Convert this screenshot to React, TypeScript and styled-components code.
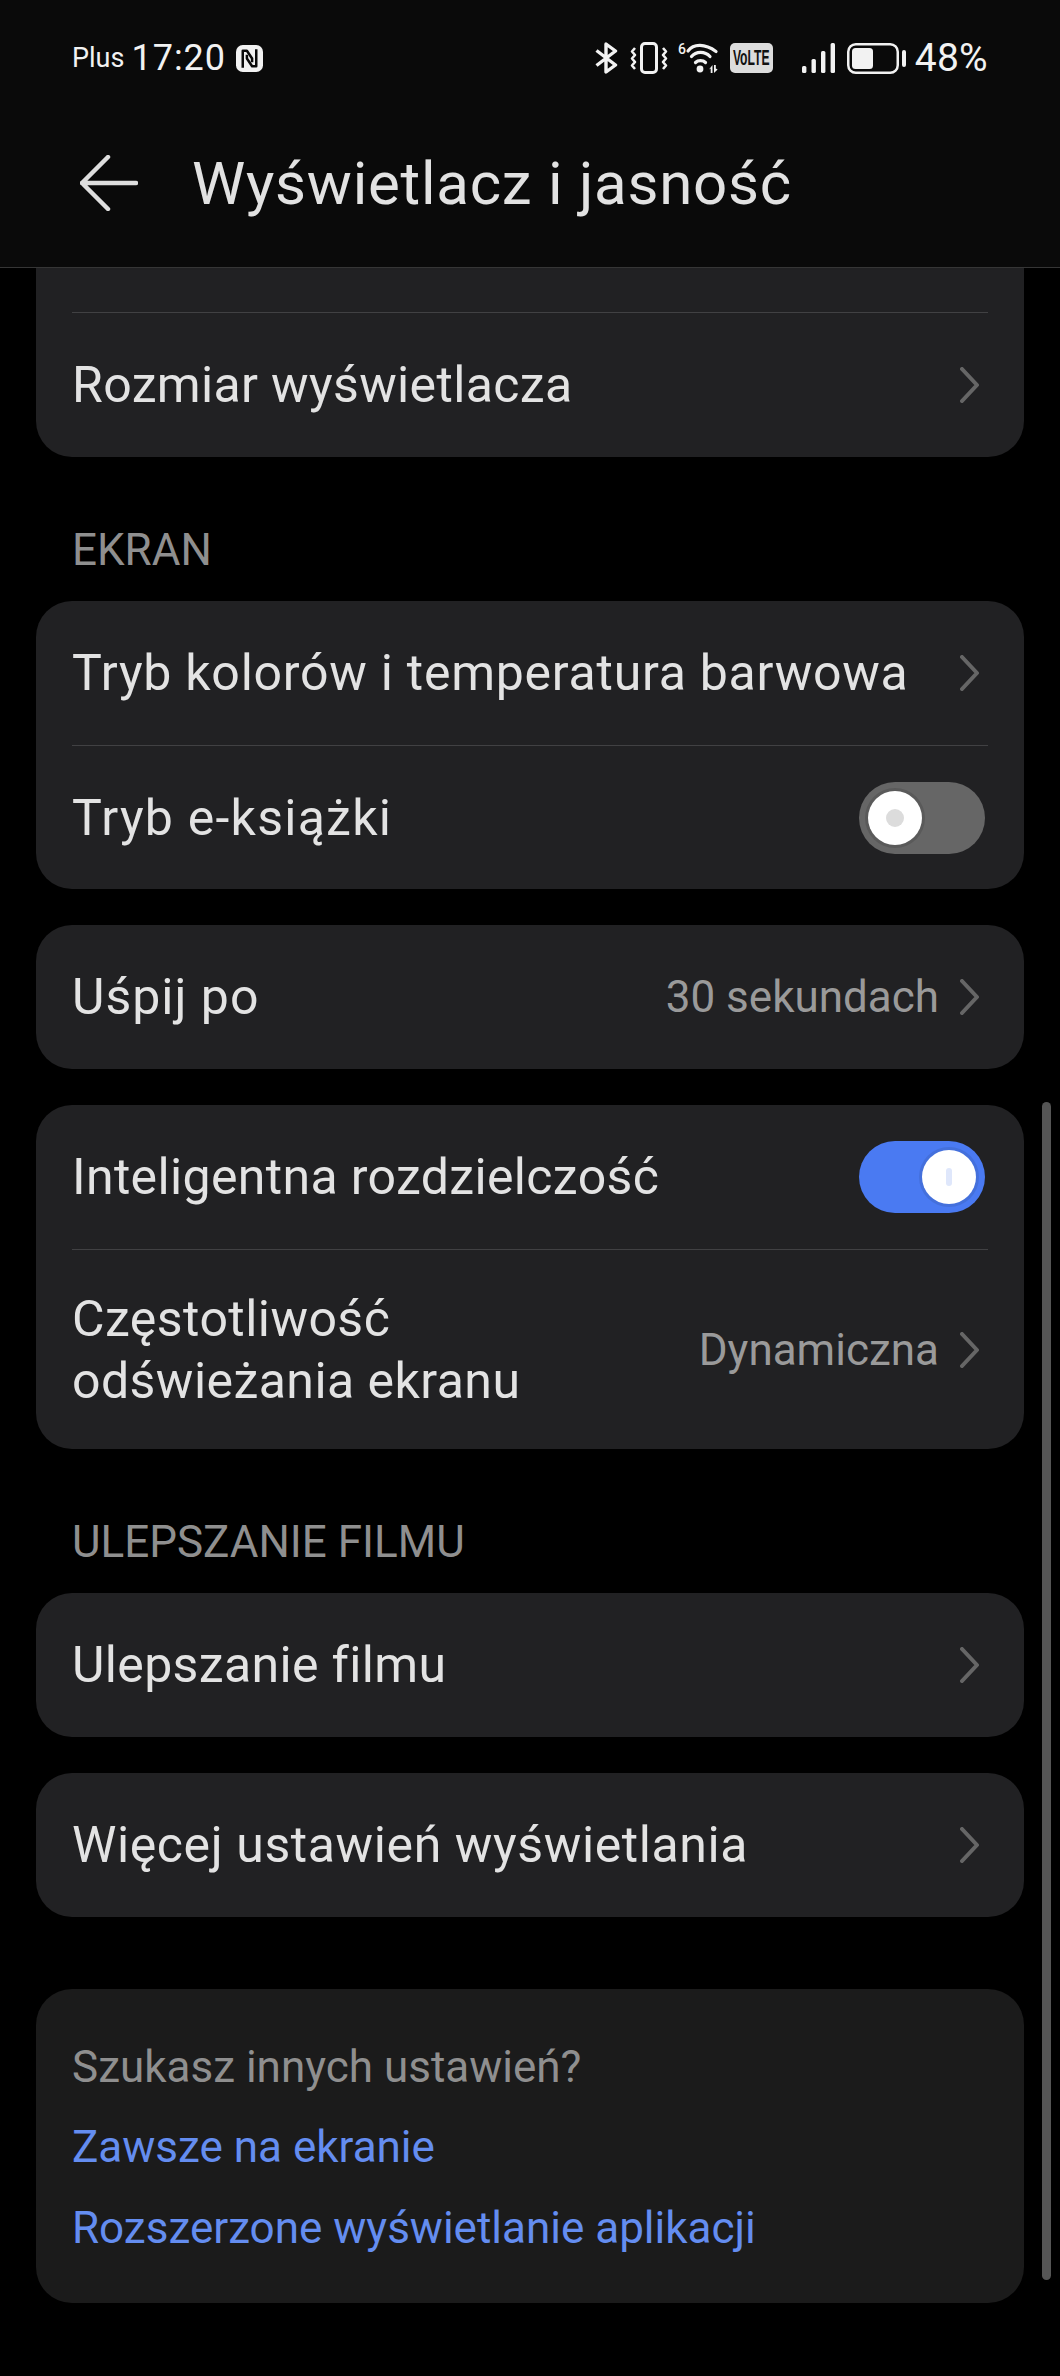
import React from 'react';
import styled, { createGlobalStyle } from 'styled-components';

const GlobalStyle = createGlobalStyle`
  html, body {
    margin: 0;
    padding: 0;
    background: #000;
  }
  body {
    font-family: Roboto, "Noto Sans", sans-serif;
  }
`;

const Screen = styled.div`
  position: relative;
  width: 1060px;
  height: 2376px;
  overflow: hidden;
  background: #000;
  display: flex;
  flex-direction: column;
`;

const Header = styled.header`
  height: 267px;
  background: #0a0a0a;
  border-bottom: 1px solid #363636;
  display: flex;
  flex-direction: column;
`;

const StatusBar = styled.div`
  height: 116px;
  padding: 0 72px;
  display: flex;
  align-items: center;
  justify-content: space-between;
  color: #f2f2f2;
`;

const StatusLeft = styled.div`
  display: flex;
  align-items: center;
`;

const Carrier = styled.span`
  font-size: 27px;
  margin-right: 7px;
`;

const Clock = styled.span`
  font-size: 36px;
  letter-spacing: 1px;
  margin-right: 10px;
`;

const StatusRight = styled.div`
  display: flex;
  align-items: center;
`;

const IconCluster = styled.div`
  display: flex;
  align-items: center;
  gap: 10px;
  margin-right: 29px;
`;

const Volte = styled.span`
  width: 43px;
  height: 30px;
  border-radius: 5px;
  background: #dcdcdc;
  display: flex;
  align-items: center;
  justify-content: center;
`;

const VolteText = styled.span`
  color: #111;
  font-family: "Liberation Sans", sans-serif;
  font-size: 22px;
  font-weight: 700;
  transform: scaleX(0.55);
`;

const Battery = styled.svg`
  margin-left: 12px;
`;

const Percent = styled.span`
  font-size: 39px;
  margin-left: 9px;
  letter-spacing: 0.3px;
`;

const TitleBar = styled.div`
  height: 134px;
  padding: 0 72px 0 80px;
  display: flex;
  align-items: center;
  gap: 54px;
`;

const Title = styled.h1`
  margin: 0;
  font-size: 60px;
  font-weight: 400;
  letter-spacing: 0.75px;
  color: #e2e2e2;
`;

const Content = styled.main`
  padding: 0 36px;
  display: flex;
  flex-direction: column;
`;

const Card = styled.section<{ $clipped?: boolean; $gap?: number }>`
  background: #212123;
  border-radius: ${p => (p.$clipped ? '0 0 36px 36px' : '36px')};
  margin-top: ${p => p.$gap ?? 0}px;
  padding: 0 36px ${p => (p.$clipped ? 1 : 0)}px;
`;

const ClippedRow = styled.div`
  height: 44px;
`;

const Row = styled.div<{ $divided?: boolean; $tall?: boolean }>`
  box-sizing: border-box;
  height: ${p => (p.$tall ? 200 : 144)}px;
  border-top: ${p => (p.$divided ? '1px solid #414143' : 'none')};
  display: flex;
  align-items: center;
  justify-content: space-between;
`;

const Label = styled.span<{ $track?: number }>`
  font-size: 50px;
  line-height: 62px;
  letter-spacing: ${p => p.$track ?? 0.45}px;
  color: #e3e3e3;
`;

const Trailing = styled.div`
  display: flex;
  align-items: center;
`;

const Value = styled.span`
  font-size: 44px;
  color: #9a9a9a;
  margin-right: 21px;
`;

const Chevron = styled.svg`
  margin-right: 9px;
`;

const SectionTitle = styled.h2`
  margin: 0;
  padding: 64px 36px 22px;
  font-size: 44px;
  line-height: 58px;
  font-weight: 400;
  color: #8f8f8f;
`;

const Switch = styled.div<{ $on?: boolean }>`
  width: 126px;
  height: 72px;
  margin-right: 3px;
  padding: 9px;
  box-sizing: border-box;
  border-radius: 36px;
  background: ${p => (p.$on ? '#4a7af2' : '#666666')};
  display: flex;
  justify-content: ${p => (p.$on ? 'flex-end' : 'flex-start')};
`;

const Knob = styled.div<{ $on?: boolean }>`
  width: 54px;
  height: 54px;
  border-radius: 50%;
  background: #fff;
  box-shadow: 0 0 0 3px ${p => (p.$on ? '#4470dc' : '#5a5a5a')};
  display: flex;
  align-items: center;
  justify-content: center;
`;

const KnobMark = styled.div<{ $on?: boolean }>`
  width: ${p => (p.$on ? 6 : 18)}px;
  height: 18px;
  border-radius: 9px;
  background: ${p => (p.$on ? '#dfe7fb' : '#dcdcdc')};
`;

const HelpCard = styled.section`
  margin-top: 72px;
  padding: 38px 36px 34px;
  background: #1b1b1b;
  border-radius: 36px;
`;

const HelpTitle = styled.div`
  font-size: 44px;
  line-height: 80px;
  color: #8f8f8f;
`;

const HelpLink = styled.a`
  display: block;
  font-size: 44px;
  line-height: 81px;
  color: #648df0;
  text-decoration: none;
`;

const ScrollThumb = styled.div`
  position: absolute;
  top: 1102px;
  right: 9px;
  width: 9px;
  height: 1178px;
  border-radius: 5px;
  background: #555;
`;

const NfcIcon = () => (
  <svg width="27" height="27" viewBox="0 0 26 26">
    <rect width="26" height="26" rx="6.5" fill="#f2f2f2" />
    <g fill="none" stroke="#0a0a0a" strokeWidth="2.4" strokeLinejoin="round">
      <path d="M6.5 22V5.5H10.5L15.5 13V16.5" />
      <path d="M19.5 4V20.5H15.5L10.5 13V9.5" />
    </g>
  </svg>
);

const BluetoothIcon = () => (
  <svg width="25" height="32" viewBox="0 0 25 32" fill="none" stroke="#f2f2f2" strokeWidth="3.4" strokeLinejoin="round">
    <path d="M1.5 8.5 20.5 23 11 30V2L20.5 9 1.5 23.5" />
  </svg>
);

const VibrateIcon = () => (
  <svg width="38" height="32" viewBox="0 0 38 32" fill="none" stroke="#f2f2f2" strokeLinejoin="round">
    <rect x="11.5" y="1.5" width="15" height="29" rx="3.5" strokeWidth="3" />
    <path d="M5 6 2 9.5 5 13 2 16.5 5 20 2 23.5 5 27M33 6 36 9.5 33 13 36 16.5 33 20 36 23.5 33 27" strokeWidth="2.6" />
  </svg>
);

const WifiIcon = () => (
  <svg width="42" height="32" viewBox="0 0 42 32">
    <text x="0" y="11.5" fontSize="14" fontWeight="500" fontFamily="Roboto, sans-serif" fill="#f2f2f2">6</text>
    <g fill="none" stroke="#f2f2f2" strokeWidth="3.2" strokeLinecap="round">
      <path d="M10 9C15.5 1.5 27 1.5 38 9.5" />
      <path d="M13.5 14.5C18 9 27 9 32 14.5" />
      <path d="M17.5 20.5C20 18 25 18 27.5 20.5" />
    </g>
    <circle cx="22" cy="27" r="3.4" fill="#f2f2f2" />
    <path d="M34.5 23v8h-1.8v-4.5L31 27.5zM36 23v8l3.6-3.5-1.8-1V23z" fill="#f2f2f2" />
  </svg>
);

const SignalIcon = () => (
  <svg width="33" height="30" viewBox="0 0 33 30" fill="#f2f2f2">
    <rect x="0" y="23" width="4.4" height="7" rx="1.5" />
    <rect x="9.5" y="16" width="4.4" height="14" rx="1.5" />
    <rect x="19" y="8" width="4.4" height="22" rx="1.5" />
    <rect x="28.6" y="0" width="4.4" height="30" rx="1.5" />
  </svg>
);

const BatteryIcon = () => (
  <Battery width="59" height="31" viewBox="0 0 59 31" fill="none">
    <rect x="1.25" y="1.25" width="49.5" height="28.5" rx="7.5" stroke="#f2f2f2" strokeWidth="2.5" />
    <rect x="5" y="5" width="21" height="21" rx="3.5" fill="#f2f2f2" />
    <rect x="55" y="7" width="4" height="17" rx="2" fill="#f2f2f2" />
  </Battery>
);

const BackArrow = () => (
  <svg width="58" height="56" viewBox="0 0 58 56" fill="none" stroke="#dedede" strokeWidth="4.5" strokeLinecap="round" strokeLinejoin="round">
    <path d="M28 2 2 28 28 54M2 28H56" />
  </svg>
);

const ChevronRight = () => (
  <Chevron width="19" height="36" viewBox="0 0 19 36" fill="none" stroke="#666" strokeWidth="4" strokeLinecap="round" strokeLinejoin="round">
    <path d="M2 2 17 18 2 34" />
  </Chevron>
);

const Toggle: React.FC<{ on?: boolean }> = ({ on }) => (
  <Switch $on={on}>
    <Knob $on={on}>
      <KnobMark $on={on} />
    </Knob>
  </Switch>
);

const App: React.FC = () => (
  <Screen>
    <GlobalStyle />
    <Header>
      <StatusBar>
        <StatusLeft>
          <Carrier>Plus</Carrier>
          <Clock>17:20</Clock>
          <NfcIcon />
        </StatusLeft>
        <StatusRight>
          <IconCluster>
            <BluetoothIcon />
            <VibrateIcon />
            <WifiIcon />
            <Volte>
              <VolteText>VoLTE</VolteText>
            </Volte>
          </IconCluster>
          <SignalIcon />
          <BatteryIcon />
          <Percent>48%</Percent>
        </StatusRight>
      </StatusBar>
      <TitleBar>
        <BackArrow />
        <Title>Wyświetlacz i jasność</Title>
      </TitleBar>
    </Header>
    <Content>
      <Card $clipped>
        <ClippedRow />
        <Row $divided>
          <Label $track={0.35}>Rozmiar wyświetlacza</Label>
          <ChevronRight />
        </Row>
      </Card>
      <SectionTitle>EKRAN</SectionTitle>
      <Card>
        <Row>
          <Label $track={0.75}>Tryb kolorów i temperatura barwowa</Label>
          <ChevronRight />
        </Row>
        <Row $divided>
          <Label $track={1.25}>Tryb e-książki</Label>
          <Toggle />
        </Row>
      </Card>
      <Card $gap={36}>
        <Row>
          <Label $track={1}>Uśpij po</Label>
          <Trailing>
            <Value>30 sekundach</Value>
            <ChevronRight />
          </Trailing>
        </Row>
      </Card>
      <Card $gap={36}>
        <Row>
          <Label $track={0.35}>Inteligentna rozdzielczość</Label>
          <Toggle on />
        </Row>
        <Row $divided $tall>
          <Label>
            Częstotliwość
            <br />
            odświeżania ekranu
          </Label>
          <Trailing>
            <Value>Dynamiczna</Value>
            <ChevronRight />
          </Trailing>
        </Row>
      </Card>
      <SectionTitle>ULEPSZANIE FILMU</SectionTitle>
      <Card>
        <Row>
          <Label $track={0.35}>Ulepszanie filmu</Label>
          <ChevronRight />
        </Row>
      </Card>
      <Card $gap={36}>
        <Row>
          <Label $track={0.6}>Więcej ustawień wyświetlania</Label>
          <ChevronRight />
        </Row>
      </Card>
      <HelpCard>
        <HelpTitle>Szukasz innych ustawień?</HelpTitle>
        <HelpLink href="#">Zawsze na ekranie</HelpLink>
        <HelpLink href="#">Rozszerzone wyświetlanie aplikacji</HelpLink>
      </HelpCard>
    </Content>
    <ScrollThumb />
  </Screen>
);

export default App;
